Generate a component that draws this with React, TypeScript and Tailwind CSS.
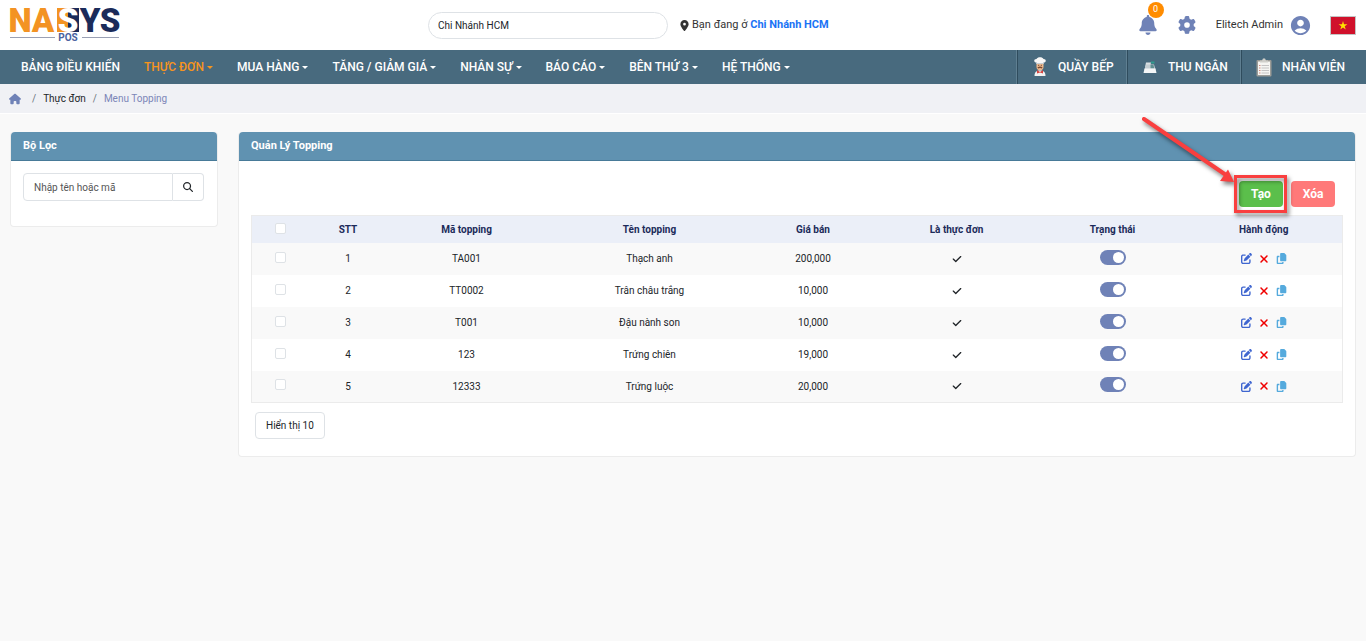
import { clsx } from "clsx";
import {
  FaBell,
  FaCheck,
  FaCopy,
  FaGear,
  FaHouse,
  FaLocationDot,
  FaMagnifyingGlass,
  FaPenToSquare,
  FaXmark,
} from "react-icons/fa6";
import { MdAccountCircle } from "react-icons/md";

interface Topping {
  code: string;
  name: string;
  price: string;
}

const toppings: Topping[] = [
  { code: "TA001", name: "Thạch anh", price: "200,000" },
  { code: "TT0002", name: "Trân châu trắng", price: "10,000" },
  { code: "T001", name: "Đậu nành son", price: "10,000" },
  { code: "123", name: "Trứng chiên", price: "19,000" },
  { code: "12333", name: "Trứng luộc", price: "20,000" },
];

const menu = [
  { label: "BẢNG ĐIỀU KHIỂN", dropdown: false },
  { label: "THỰC ĐƠN", dropdown: true, active: true },
  { label: "MUA HÀNG", dropdown: true },
  { label: "TĂNG / GIẢM GIÁ", dropdown: true },
  { label: "NHÂN SỰ", dropdown: true },
  { label: "BÁO CÁO", dropdown: true },
  { label: "BÊN THỨ 3", dropdown: true },
  { label: "HỆ THỐNG", dropdown: true },
];

function Logo() {
  return (
    <svg width="124" height="50" viewBox="0 0 124 50" role="img" aria-label="NASYS POS">
      <rect x="57" y="8" width="11" height="24" fill="#f39323" />
      <rect x="68" y="8" width="11" height="24" fill="#1b2b5a" />
      <g fontFamily="Roboto, sans-serif" fontWeight="900" fontSize="33" textAnchor="middle">
        <text x="20" y="32" fill="#f39323">N</text>
        <text x="43" y="32" fill="#f39323">A</text>
        <text x="68" y="32" fill="#ffffff">S</text>
        <text x="90" y="32" fill="#1b2b5a">Y</text>
        <text x="110" y="32" fill="#1b2b5a">S</text>
      </g>
      <path d="M10 37.500H55M82 37.500H119" stroke="#9aa0b4" />
      <text
        x="68"
        y="41"
        textAnchor="middle"
        fontFamily="Roboto, sans-serif"
        fontWeight="700"
        fontSize="10"
        fill="#4a62a0"
      >
        POS
      </text>
    </svg>
  );
}

function ChefIcon() {
  return (
    <svg width="14" height="20" viewBox="0 0 14 20" aria-hidden>
      <path d="M3.500 6.500h7V10c0 4.500-7 4.500-7 0Z" fill="#ecb98f" />
      <path d="M4.500 10.300c1.500-1 3.500-1 5 0L9 11.500 7 11l-2 .5Z" fill="#7a4a30" />
      <path d="M5.200 8.300h1M7.800 8.300h1" stroke="#5a3a28" />
      <path
        d="M3.500 7V5.500C.5 5.500.5 1.800 3.500 1.900 4.500-.4 9.500-.4 10.500 1.900c3-.1 3 3.600 0 3.600V7Z"
        fill="#f7f7f7"
      />
      <path d="M1.500 19c0-4 2-5.500 5.500-5.500s5.500 1.500 5.500 5.500Z" fill="#f2f2f2" />
      <path d="M4 13 7 15l3-2v3.500L7 15.500l-3 1Z" fill="#d8423d" />
      <path d="M3.500 6.500h7" stroke="#c9ced3" />
    </svg>
  );
}

function RegisterIcon() {
  return (
    <svg width="14" height="14" viewBox="0 0 14 14" aria-hidden>
      <path d="M3 2.500h5l-1 5H2Z" fill="#d9dfe2" />
      <path d="M8 1.500h3.500v2H8Z" fill="#2f9c8f" />
      <path d="M3 4.500h8l1.500 5H1.500Z" fill="#c3cdd2" />
      <path d="M7.500 5h3l.8 3.500H7.500Z" fill="#5f8f92" />
      <path d="M1.500 8.500h11l1 4.500H.5Z" fill="#f4f6f7" />
    </svg>
  );
}

function ClipboardIcon() {
  return (
    <svg width="16" height="19" viewBox="0 0 16 19" aria-hidden>
      <rect x="0.500" y="2" width="15" height="16.500" rx="1" fill="#9c9c97" />
      <rect x="2" y="3.500" width="12" height="13.500" fill="#f5f5f2" />
      <path d="M4 4.500V2.500h2L7 .5h2l1 2h2v2Z" fill="#cfcfca" />
      <path d="M5.500 7.500h7.500M5.500 10h7.500M5.500 12.500h7.500M5.500 15h7.500" stroke="#c4c4c4" />
      <path d="M3 7.500h1.500M3 10h1.500M3 12.500h1.500M3 15h1.500" stroke="#d08a7e" />
    </svg>
  );
}

const stations = [
  { label: "QUẦY BẾP", icon: <ChefIcon />, width: "w-[110px]" },
  { label: "THU NGÂN", icon: <RegisterIcon />, width: "w-[114px]" },
  { label: "NHÂN VIÊN", icon: <ClipboardIcon />, width: "w-[125px]" },
];

function TopBar() {
  return (
    <header className="flex h-[50px] items-center bg-white">
      <a href="#" className="w-[428px]">
        <Logo />
      </a>
      <input
        type="text"
        aria-label="Chi nhánh"
        defaultValue="Chi Nhánh HCM"
        className="h-[27px] w-60 rounded-full border border-[#dee2e6] px-[9px] text-[10px] text-[#212529] outline-none"
      />
      <p className="ml-[11px] flex items-center gap-[2px] text-[#333]">
        <FaLocationDot className="size-[11px]" />
        <span>
          Bạn đang ở{" "}
          <a href="#" className="font-bold text-[#1a73f5]">
            Chi Nhánh HCM
          </a>
        </span>
      </p>
      <div className="ml-auto flex items-center pr-[10px]">
        <button type="button" aria-label="Thông báo" className="relative mr-5 text-[#6f82b7]">
          <FaBell className="size-5" />
          <span className="absolute -top-[13px] left-[10px] flex size-4 items-center justify-center rounded-full bg-[#ff8c00] text-[9px] text-white">
            0
          </span>
        </button>
        <button type="button" aria-label="Cài đặt" className="mr-5 text-[#6f82b7]">
          <FaGear className="size-[18px]" />
        </button>
        <button type="button" className="mr-[18px] flex items-center gap-[6px] text-[#333]">
          Elitech Admin
          <MdAccountCircle className="size-[23px] text-[#6f82b7]" />
        </button>
        <button type="button" aria-label="Tiếng Việt">
          <svg width="26" height="19" viewBox="0 0 26 19" aria-hidden>
            <rect x="0.500" y="0.500" width="25" height="18" fill="#d0112b" stroke="#c4c4c4" />
            <path d="m13 5 1 3.200h3.400l-2.700 2 1 3.300L13 11.500l-2.700 2 1-3.300-2.700-2H12Z" fill="#ffe000" />
          </svg>
        </button>
      </div>
    </header>
  );
}

function NavBar() {
  return (
    <nav className="flex h-[34px] bg-[#486a7e] text-[12px] font-medium text-white">
      <ul className="flex items-center gap-6 pl-[21px]">
        {menu.map((item) => (
          <li key={item.label}>
            <a href="#" className={clsx("flex items-center gap-[3px]", item.active && "text-[#f7941d]")}>
              {item.label}
              {item.dropdown && (
                <span className="border-x-[3px] border-t-[3px] border-x-transparent border-t-current" />
              )}
            </a>
          </li>
        ))}
      </ul>
      <div className="ml-auto flex border-l border-[#5f7f91]">
        {stations.map((s) => (
          <a
            key={s.label}
            href="#"
            className={clsx(
              "flex items-center border-x border-l-[#2f4c5d] border-r-[#5f7f91] last:border-r-transparent",
              s.width,
            )}
          >
            <span className="flex w-10 justify-center pl-1">{s.icon}</span>
            {s.label}
          </a>
        ))}
      </div>
    </nav>
  );
}

function Breadcrumb() {
  return (
    <nav
      aria-label="breadcrumb"
      className="flex h-[30px] items-center border-b border-white bg-[#f0f1f5] pl-[9px] text-[10px]"
    >
      <a href="#" aria-label="Trang chủ" className="text-[#6f82b7]">
        <FaHouse className="size-3" />
      </a>
      <span className="mr-[7px] ml-[11px] text-[#6c757d]">/</span>
      <a href="#" className="text-[#212529]">Thực đơn</a>
      <span className="mx-[7px] text-[#6c757d]">/</span>
      <span className="text-[#7c86b8]">Menu Topping</span>
    </nav>
  );
}

function CardTitle({ children }: { children: string }) {
  return (
    <h2 className="flex h-[29px] items-center rounded-t border-b border-[#477a98] bg-[#6092b1] px-3 text-[11px] font-bold text-white">
      {children}
    </h2>
  );
}

function FilterCard() {
  return (
    <aside className="w-52 shrink-0 rounded border border-t-0 border-[#ececec] bg-white">
      <CardTitle>Bộ Lọc</CardTitle>
      <div className="flex px-3 pt-3 pb-[25px]">
        <input
          type="text"
          aria-label="Nhập tên hoặc mã"
          placeholder="Nhập tên hoặc mã"
          className="h-7 w-[150px] rounded-l border border-[#dee2e6] px-[10px] text-[10px] outline-none placeholder:text-[#555]"
        />
        <button
          type="button"
          aria-label="Tìm kiếm"
          className="flex h-7 w-[31px] items-center justify-center rounded-r border border-l-0 border-[#dee2e6] text-[#212529]"
        >
          <FaMagnifyingGlass className="size-[10px]" />
        </button>
      </div>
    </aside>
  );
}

const checkboxClass =
  "mx-auto block size-[11px] appearance-none rounded-xs border border-[#dee2e6] bg-white";

function ToppingRow({ topping, index }: { topping: Topping; index: number }) {
  return (
    <tr className="h-8 odd:bg-[#f9f9f9]">
      <td className="pb-[3px]">
        <input type="checkbox" aria-label={`Chọn ${topping.name}`} className={checkboxClass} />
      </td>
      <td>{index + 1}</td>
      <td>{topping.code}</td>
      <td>{topping.name}</td>
      <td>{topping.price}</td>
      <td>
        <FaCheck className="mx-auto size-[10px]" />
      </td>
      <td className="pb-[3px]">
        <label className="relative mx-auto block h-[15px] w-[26px]">
          <input
            type="checkbox"
            role="switch"
            defaultChecked
            aria-label={`Trạng thái ${topping.name}`}
            className="peer block h-full w-full appearance-none rounded-full bg-gray-300 checked:bg-[#6f82b7]"
          />
          <span className="pointer-events-none absolute top-[2px] left-[2px] size-[11px] rounded-full bg-white peer-checked:left-[13px]" />
        </label>
      </td>
      <td>
        <div className="flex items-center justify-center gap-[6px]">
          <button type="button" aria-label="Sửa" className="text-[#3f66d0]">
            <FaPenToSquare className="size-[11px]" />
          </button>
          <button type="button" aria-label="Xóa" className="text-[#f00000]">
            <FaXmark className="size-3" />
          </button>
          <button type="button" aria-label="Sao chép" className="text-[#55aadd]">
            <FaCopy className="size-[11px]" />
          </button>
        </div>
      </td>
    </tr>
  );
}

function ToppingTable() {
  return (
    <table className="w-full table-fixed border border-[#ebebeb] text-center text-[10px] text-[#212529]">
      <colgroup>
        <col className="w-[58px]" />
        <col className="w-[77px]" />
        <col className="w-[160px]" />
        <col className="w-[206px]" />
        <col className="w-[121px]" />
        <col className="w-[166px]" />
        <col className="w-[146px]" />
        <col className="w-[157px]" />
      </colgroup>
      <thead>
        <tr className="h-[27px] bg-[#ebeff8] text-[#1b2b5a]">
          <th className="pb-[2px]">
            <input type="checkbox" aria-label="Chọn tất cả" className={checkboxClass} />
          </th>
          <th>STT</th>
          <th>Mã topping</th>
          <th>Tên topping</th>
          <th>Giá bán</th>
          <th>Là thực đơn</th>
          <th>Trạng thái</th>
          <th>Hành động</th>
        </tr>
      </thead>
      <tbody>
        {toppings.map((topping, i) => (
          <ToppingRow key={topping.code} topping={topping} index={i} />
        ))}
      </tbody>
    </table>
  );
}

// Red frame and arrow pointing at the create button.
function CreateCallout() {
  return (
    <svg
      className="pointer-events-none absolute -top-[66px] -left-[100px] drop-shadow-[2px_3px_2px_rgba(0,0,0,0.5)]"
      width="160"
      height="110"
      viewBox="0 0 160 110"
      aria-hidden
    >
      <rect x="96.500" y="61.500" width="50" height="35" fill="none" stroke="#f93f3f" strokeWidth="3" />
      <path d="M5 4 87 60" stroke="#f93f3f" strokeWidth="4" strokeLinecap="round" />
      <path d="m95 67-14-1 8-11.500Z" fill="#f93f3f" />
    </svg>
  );
}

function ToppingCard() {
  return (
    <main className="min-w-0 flex-1 rounded border border-t-0 border-[#ececec] bg-white">
      <CardTitle>Quản Lý Topping</CardTitle>
      <div className="px-3 pb-[17px]">
        <div className="flex justify-end gap-2 pt-5 pr-2 pb-2 text-[12px] font-bold text-white">
          <div className="relative">
            <button type="button" className="h-[26px] w-11 rounded bg-[#5bbf4b]">Tạo</button>
            <CreateCallout />
          </div>
          <button type="button" className="h-[26px] w-11 rounded bg-[#ff7979]">Xóa</button>
        </div>
        <ToppingTable />
        <button
          type="button"
          className="mt-[9px] ml-1 h-[27px] rounded border border-[#dee2e6] px-[10px] text-[10px] text-[#212529]"
        >
          Hiển thị 10
        </button>
      </div>
    </main>
  );
}

export default function App() {
  return (
    <div className="min-h-screen bg-[#f9f9f9] font-['Roboto','Noto_Sans',sans-serif] text-[11px]">
      <TopBar />
      <NavBar />
      <Breadcrumb />
      <div className="flex items-start gap-5 px-[10px] pt-[18px]">
        <FilterCard />
        <ToppingCard />
      </div>
    </div>
  );
}
